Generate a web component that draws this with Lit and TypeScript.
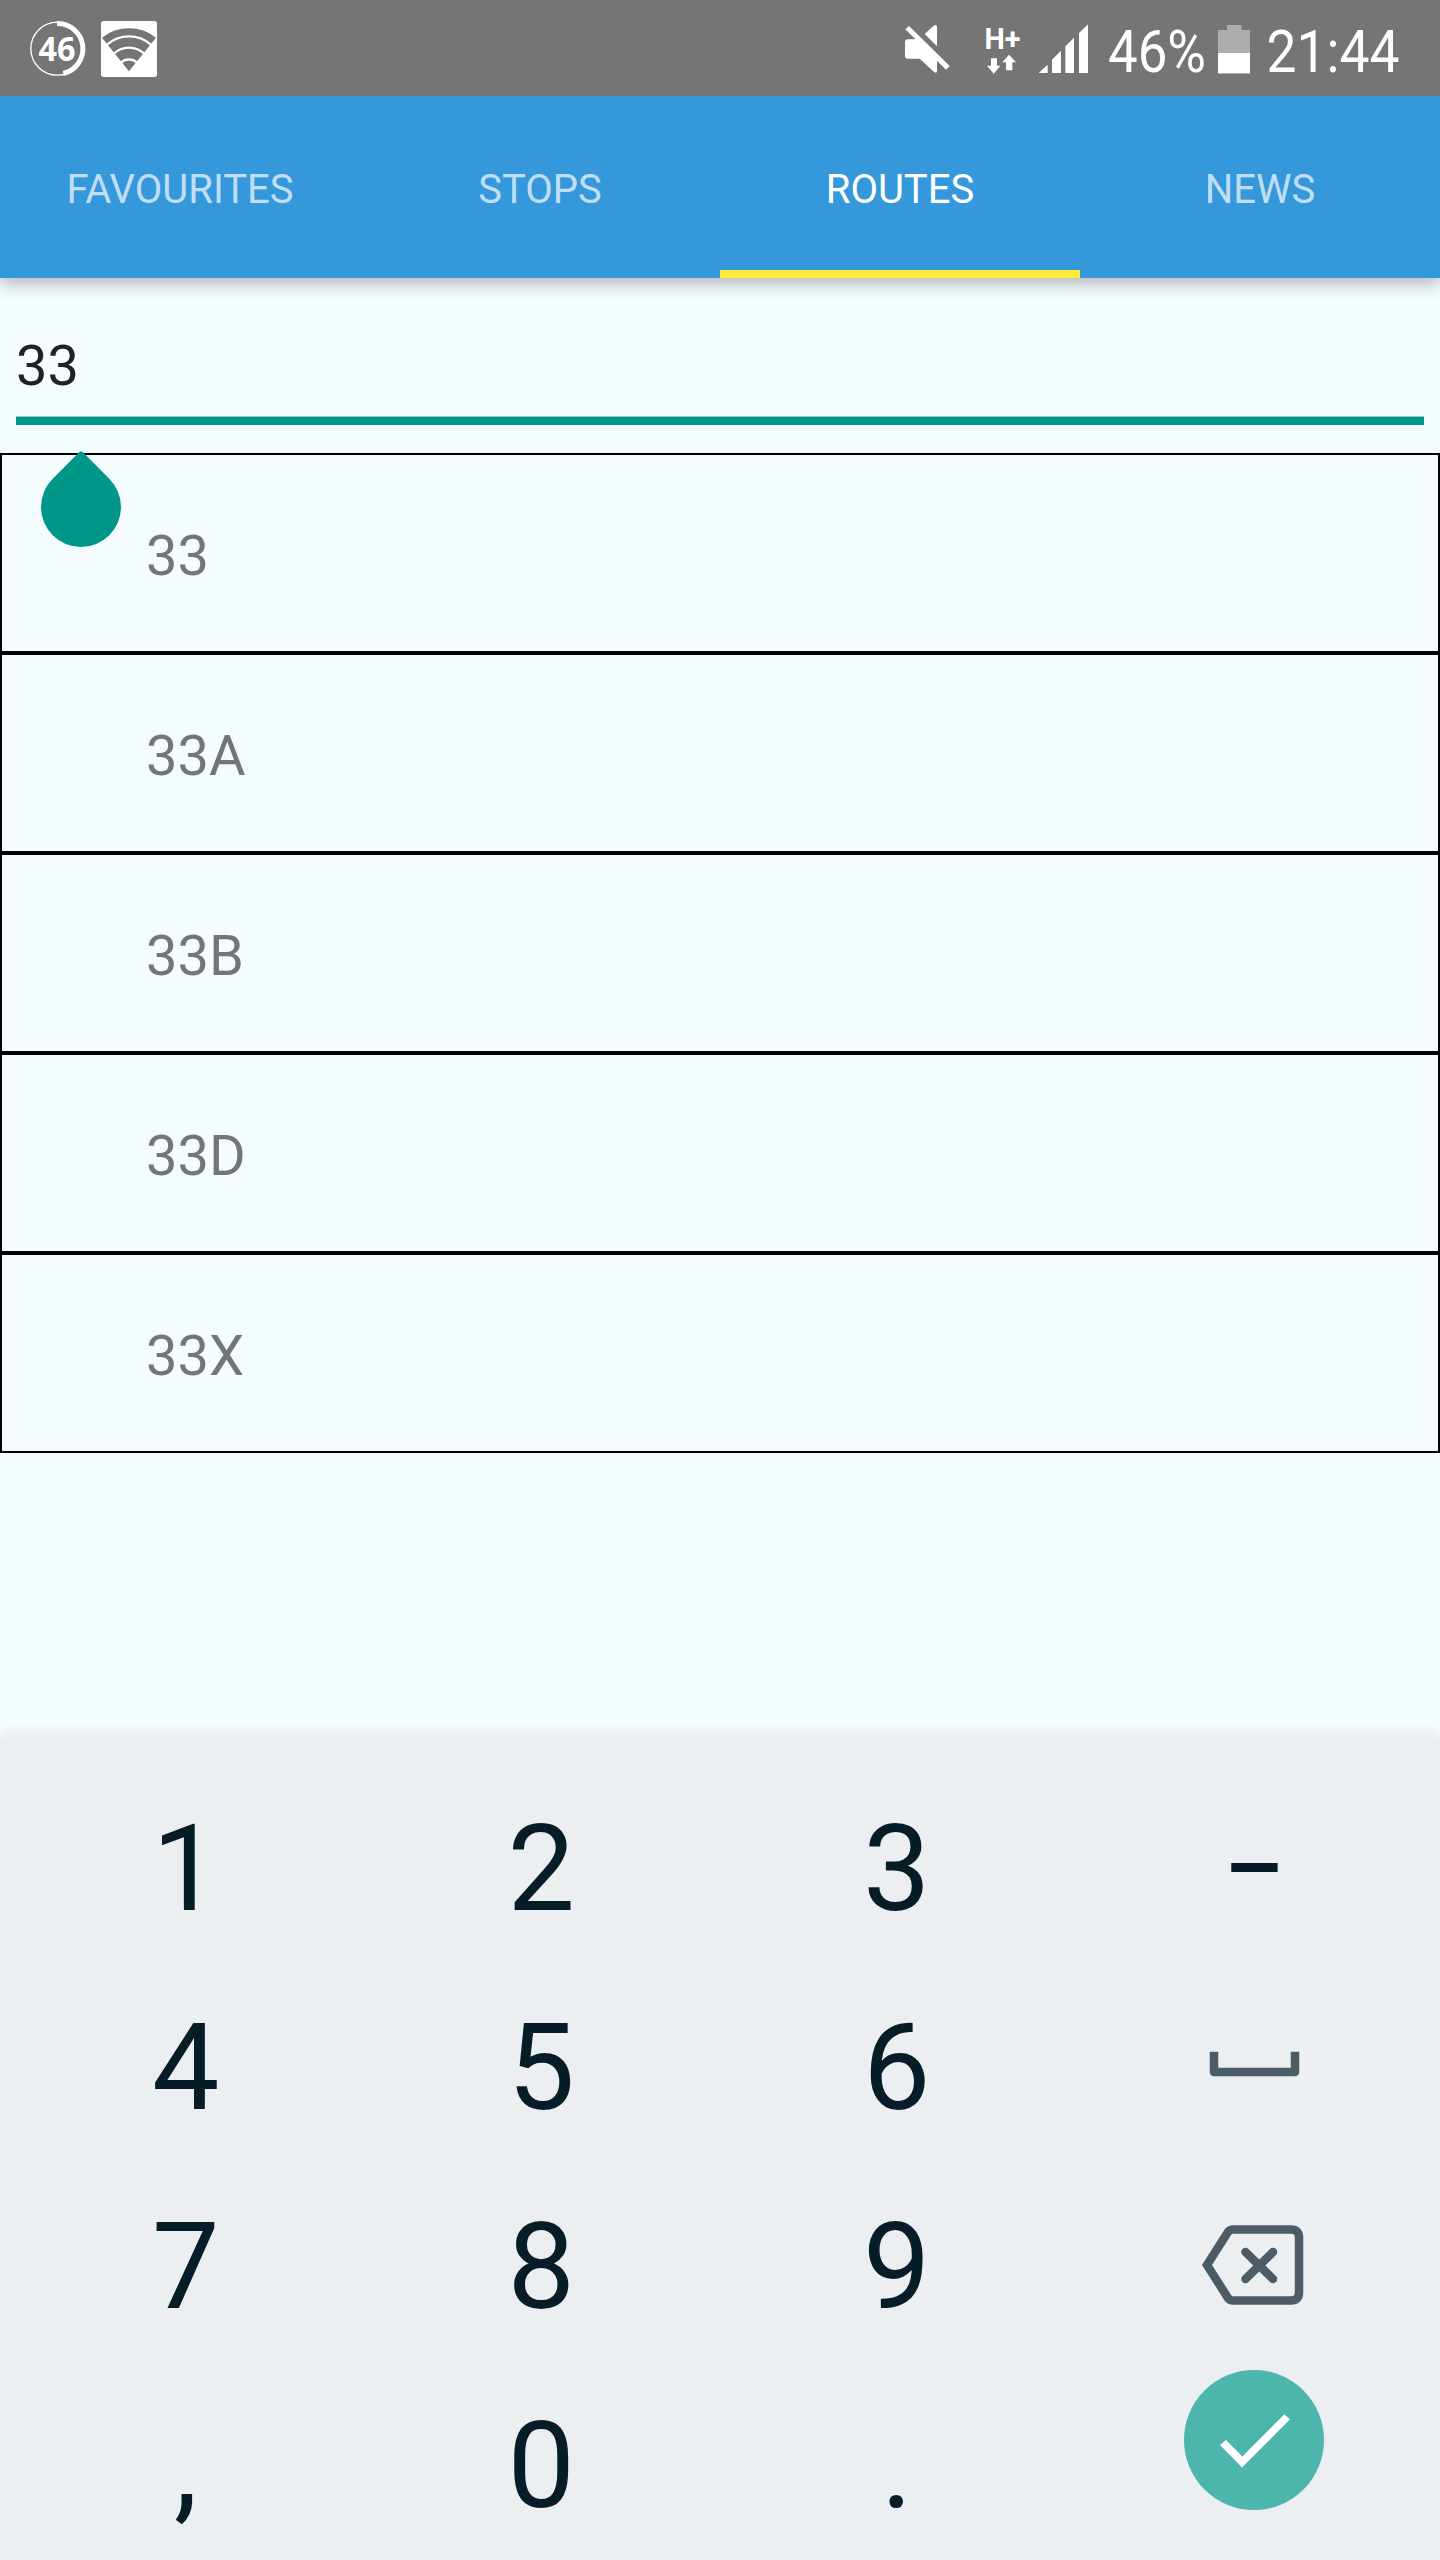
import { LitElement, html, css, svg } from "lit";
import { customElement } from "lit/decorators.js";

@customElement("status-bar")
class StatusBar extends LitElement {
  static styles = css`
    :host { display: block; flex: none; height: 96px; background: #757575; position: relative; z-index: 1; }
    .bar { display: block; width: 1440px; height: 96px; }
    .condensed { font: 400 60px Roboto, sans-serif; fill: #fff; }
    .small { font: 700 34px "Open Sans", sans-serif; fill: #fff; }
    .net { font: 700 30px Roboto, sans-serif; fill: #fff; }
  `;
  render() {
    return html`<svg class="bar" viewBox="0 0 1440 96">
      <g transform="scale(.33333)">
        <circle cx="172" cy="146" r="79.5" fill="none" stroke="#fff" stroke-width="4" />
        <path d="M171 70.5A76 76 0 0 1 190 220.5" fill="none" stroke="#fff" stroke-width="15" />
        <rect x="303" y="63" width="168" height="168" rx="8" fill="#fff" />
        <path d="M387 214L306 113A129 129 0 0 1 468 113Z" fill="#757575" />
        <g fill="none" stroke="#fff" stroke-width="7">
          <path d="M320 135A100 100 0 0 1 454 135" />
          <path d="M340 162A67 67 0 0 1 434 162" />
          <path d="M361 190A35 35 0 0 1 413 190" />
        </g>
      </g>
      <text class="small" x="38.500" y="61" textLength="37" lengthAdjust="spacingAndGlyphs">46</text>
      <g transform="translate(880 0) scale(.33333)" fill="#fff">
        <path d="M84 118H112L171 177V213Q171 221 163 217L119 176H84Q75 176 75 167V127Q75 118 84 118Z" />
        <path d="M76 88L87 78L209 198L198 209Z" />
        <path d="M134 102L160 78Q171 70 171 82V139Z" />
        <path d="M333 175H351V197H361L341 221L321 197H333Z" />
        <path d="M387 164L408 187H397V211H378V187H367Z" />
        <path d="M476 219L503 194V219ZM516 219V179L543 152V219ZM556 219V139L582 113V219ZM597 219V99L624 73V219Z" />
      </g>
      <text class="net" x="984.500" y="49" textLength="36" lengthAdjust="spacingAndGlyphs">H+</text>
      <text class="condensed" x="1108" y="72" textLength="98" lengthAdjust="spacingAndGlyphs">46%</text>
      <path d="M1227 25H1241.500V30H1250V74H1218V30H1227Z" fill="#adadad" />
      <rect x="1218" y="53" width="32" height="20" fill="#fff" />
      <text class="condensed" x="1266.500" y="72" textLength="133" lengthAdjust="spacingAndGlyphs">21:44</text>
    </svg>`;
  }
}

@customElement("tab-strip")
class TabStrip extends LitElement {
  static styles = css`
    :host { display: block; flex: none; height: 182px; background: #3498db; position: relative;
      box-shadow: 0 6px 16px rgba(0, 0, 0, 0.28); }
    .tabs { display: grid; grid-template-columns: repeat(4, 1fr); height: 182px; }
    .tab { display: flex; align-items: center; justify-content: center; box-sizing: border-box;
      border-bottom: 8px solid transparent; padding-top: 14px;
      font: 400 40px/48px Roboto, sans-serif; color: rgba(255, 255, 255, 0.7); }
    .active { color: #fff; border-bottom-color: #ffeb3b; }
  `;
  render() {
    return html`<div class="tabs">
      ${["FAVOURITES", "STOPS", "ROUTES", "NEWS"].map(
        (t) => html`<div class="tab ${t === "ROUTES" ? "active" : ""}">${t}</div>`
      )}
    </div>`;
  }
}

const icons: Record<string, unknown> = {
  space: svg`<path d="M1214 2056V2072H1295V2056" transform="translate(-1184 -2020)" fill="none" stroke="#4b5c66" stroke-width="8.500" stroke-linecap="square" stroke-linejoin="round"/>`,
  del: svg`<g transform="translate(-1184 -2219)" fill="none" stroke="#4b5c66" stroke-width="8.500">
      <path d="M1233 2229.500H1291Q1299 2229.500 1299 2237.500V2292.500Q1299 2300.500 1291 2300.500H1233Q1230 2300.500 1228 2298L1207 2265L1228 2232Q1230 2229.500 1233 2229.500Z"/>
      <path d="M1245.500 2252L1273 2279M1273 2252L1245.500 2279" stroke-linecap="round"/></g>`,
  done: svg`<g transform="translate(-1184 -2370)"><circle cx="1254" cy="2440" r="70" fill="#4db6ac"/>
      <path d="M1226 2440L1220 2445L1242 2467.500L1290 2419.300L1284.300 2414.300L1242.300 2456.400Z" fill="#fff"/></g>`,
};

@customElement("number-pad")
class NumberPad extends LitElement {
  static styles = css`
    :host { display: block; flex: none; height: 822px; background: #ebeff2;
      box-shadow: 0 -4px 12px rgba(60, 80, 80, 0.1); }
    .pad { display: grid; grid-template-columns: 355.5px 355.5px 355.5px 1fr; grid-auto-rows: 199px;
      padding: 32px 6px 0 8px; height: 100%; box-sizing: border-box; overflow: hidden; }
    .key { display: flex; justify-content: center; align-items: center; box-sizing: border-box;
      font: 400 120px/199px Roboto, sans-serif; color: #061d28; }
    .dash { transform: scaleX(0.79); }
    .icon { display: block; width: 140px; height: 90px; }
    .space, .del { padding-bottom: 7px; }
    .done { align-items: flex-start; padding-top: 3px; }
    .done .icon { height: 140px; }
  `;
  render() {
    const keys = ["1", "2", "3", "–", "4", "5", "6", "space", "7", "8", "9", "del", ",", "0", ".", "done"];
    return html`<div class="pad">
      ${keys.map((k) =>
        icons[k]
          ? html`<div class="key ${k}"><svg class="icon" viewBox="0 0 140 ${k === "done" ? 140 : 90}">${icons[k]}</svg></div>`
          : html`<div class="key ${k === "–" ? "dash" : ""}">${k}</div>`
      )}
    </div>`;
  }
}

@customElement("app-root")
class AppRoot extends LitElement {
  static styles = css`
    :host { display: flex; flex-direction: column; position: relative; width: 1440px; height: 2560px;
      overflow: hidden; background: #f5fcff; font-family: Roboto, sans-serif; }
    .content { flex: none; height: 1460px; display: flex; flex-direction: column; }
    .field { margin: 46px 16px 28px; height: 101px; box-sizing: border-box; padding-top: 9px;
      border-bottom: 8px solid #009688; box-shadow: inset 0 -1px 0 rgba(0, 150, 136, 0.4);
      font-size: 56px; line-height: 66px; color: #212121; }
    .row { height: 200px; box-sizing: border-box; border: 2px solid #000; padding: 6px 0 0 144px;
      display: flex; align-items: center; font-size: 56px; line-height: 66px; color: #727677; }
    .handle { position: absolute; left: 41px; top: 467px; width: 80px; height: 80px;
      background: #009688; border-radius: 2px 50% 50% 50%; transform: rotate(45deg); }
  `;
  render() {
    return html`
      <status-bar></status-bar>
      <tab-strip></tab-strip>
      <div class="content">
        <div class="field">33</div>
        ${["33", "33A", "33B", "33D", "33X"].map((r) => html`<div class="row">${r}</div>`)}
      </div>
      <number-pad></number-pad>
      <div class="handle"></div>
    `;
  }
}
